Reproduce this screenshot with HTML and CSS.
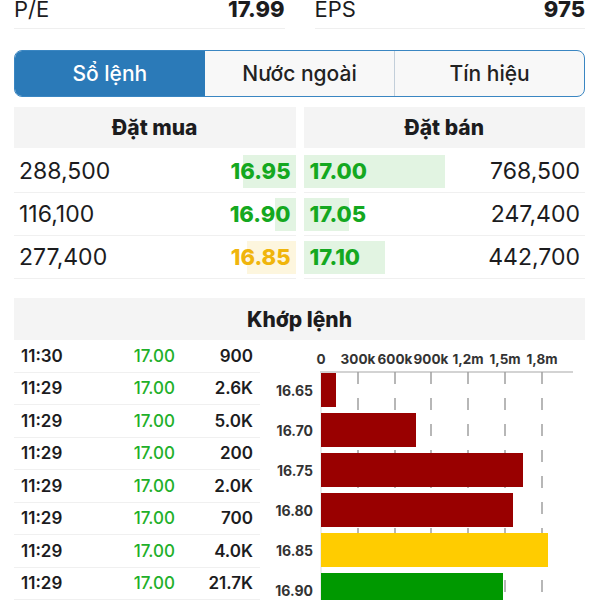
FILE: index.html
```html
<!DOCTYPE html>
<html>
<head>
    <title>Sổ lệnh</title>
    <link rel="stylesheet" href="styles.css">
</head>
<body>
    <div class="container">
        <div class="stats">
            <div class="stat"><span>P/E</span><b>17.99</b></div>
            <div class="stat"><span>EPS</span><b>975</b></div>
        </div>

        <div class="tabs">
            <div class="tab active">Sổ lệnh</div>
            <div class="tab">Nước ngoài</div>
            <div class="tab">Tín hiệu</div>
        </div>

        <div class="book">
            <div class="book-head">Đặt mua</div>
            <div class="book-head">Đặt bán</div>

            <div class="cell bid">
                <span>288,500</span>
                <div class="bar" style="width: 53px"></div>
                <b class="price up">16.95</b>
            </div>
            <div class="cell ask">
                <div class="bar" style="width: 141px"></div>
                <b class="price up">17.00</b>
                <span>768,500</span>
            </div>

            <div class="cell bid">
                <span>116,100</span>
                <div class="bar" style="width: 21px"></div>
                <b class="price up">16.90</b>
            </div>
            <div class="cell ask">
                <div class="bar" style="width: 45px"></div>
                <b class="price up">17.05</b>
                <span>247,400</span>
            </div>

            <div class="cell bid">
                <span>277,400</span>
                <div class="bar ref" style="width: 49px"></div>
                <b class="price ref">16.85</b>
            </div>
            <div class="cell ask">
                <div class="bar" style="width: 81px"></div>
                <b class="price up">17.10</b>
                <span>442,700</span>
            </div>
        </div>

        <div class="match-head">Khớp lệnh</div>

        <div class="match">
            <div class="ticks">
                <div class="tick"><span>11:30</span><span class="up">17.00</span><span>900</span></div>
                <div class="tick"><span>11:29</span><span class="up">17.00</span><span>2.6K</span></div>
                <div class="tick"><span>11:29</span><span class="up">17.00</span><span>5.0K</span></div>
                <div class="tick"><span>11:29</span><span class="up">17.00</span><span>200</span></div>
                <div class="tick"><span>11:29</span><span class="up">17.00</span><span>2.0K</span></div>
                <div class="tick"><span>11:29</span><span class="up">17.00</span><span>700</span></div>
                <div class="tick"><span>11:29</span><span class="up">17.00</span><span>4.0K</span></div>
                <div class="tick"><span>11:29</span><span class="up">17.00</span><span>21.7K</span></div>
            </div>

            <svg class="chart" width="325" height="260" viewBox="260 340 325 260">
                <!-- scale labels -->
                <g class="axis-label">
                    <text x="321" y="364">0</text>
                    <text x="358" y="364">300k</text>
                    <text x="395" y="364">600k</text>
                    <text x="431" y="364">900k</text>
                    <text x="468" y="364">1,2m</text>
                    <text x="505" y="364">1,5m</text>
                    <text x="542" y="364">1,8m</text>
                </g>

                <!-- grid -->
                <line x1="320" y1="372" x2="573" y2="372" stroke="#c4c4c4" stroke-width="1.5"/>
                <line x1="321" y1="372" x2="321" y2="600" stroke="#dcdcdc" stroke-width="1"/>
                <g stroke="#a0a0a0" stroke-width="1.5" stroke-dasharray="12 14">
                    <line x1="358" y1="372" x2="358" y2="600"/>
                    <line x1="395" y1="372" x2="395" y2="600"/>
                    <line x1="431" y1="372" x2="431" y2="600"/>
                    <line x1="468" y1="372" x2="468" y2="600"/>
                    <line x1="505" y1="372" x2="505" y2="600"/>
                    <line x1="542" y1="372" x2="542" y2="600"/>
                </g>

                <!-- volume by price -->
                <rect x="321" y="373" width="15" height="34" fill="#990000"/>
                <rect x="321" y="413" width="95" height="34" fill="#990000"/>
                <rect x="321" y="453" width="202" height="34" fill="#990000"/>
                <rect x="321" y="493" width="192" height="34" fill="#990000"/>
                <rect x="321" y="533" width="227" height="34" fill="#ffcc00"/>
                <rect x="321" y="573" width="182" height="34" fill="#009900"/>

                <g class="price-label">
                    <text x="313" y="396">16.65</text>
                    <text x="313" y="436">16.70</text>
                    <text x="313" y="476">16.75</text>
                    <text x="313" y="516">16.80</text>
                    <text x="313" y="556">16.85</text>
                    <text x="313" y="596">16.90</text>
                </g>
            </svg>
        </div>
    </div>
</body>
</html>
```

FILE: styles.css
```css
body {
    background-color: #fff;
    font-family: Inter, "Noto Sans", sans-serif;
    color: #1c1c1e;
    margin: 0;
    padding: 0;
    overflow: hidden;
}

.container {
    padding: 0 15px 0 14px;
}

.up {
    color: #14a820;
}

.ref {
    color: #f0b50c;
}

/* top stats */
.stats {
    display: grid;
    grid-template-columns: 1fr 1fr;
    column-gap: 30px;
    margin-top: -4px;
}

.stat {
    display: flex;
    justify-content: space-between;
    font-size: 22px;
    line-height: 26px;
    padding-bottom: 6px;
    border-bottom: 1px solid #efefef;
}

.stat b {
    font-weight: 800;
}

/* tabs */
.tabs {
    display: grid;
    grid-template-columns: 1fr 1fr 1fr;
    margin-top: 21px;
    height: 47px;
    box-sizing: border-box;
    border: 1.5px solid #3a86c2;
    border-radius: 8px;
    overflow: hidden;
    background-color: #f8f8f8;
}

.tab {
    display: flex;
    align-items: center;
    justify-content: center;
    font-size: 21px;
    font-weight: 500;
    color: #222;
}

.tab + .tab {
    border-left: 1px solid #c3cfda;
}

.tab.active {
    background-color: #2b7ab8;
    color: #fff;
}

.tab.active + .tab {
    border-left: none;
}

/* order book */
.book {
    display: grid;
    grid-template-columns: 1fr 1fr;
    column-gap: 8px;
    margin-top: 10px;
}

.book-head {
    height: 41px;
    margin-bottom: 2px;
    background-color: #f4f4f4;
    display: flex;
    align-items: center;
    justify-content: center;
    font-size: 21px;
    font-weight: 800;
}

.cell {
    position: relative;
    height: 42px;
    border-bottom: 1px solid #f0f0f0;
    display: flex;
    align-items: center;
    justify-content: space-between;
    font-size: 23px;
}

.cell span,
.cell .price {
    position: relative;
    z-index: 1;
}

.cell .price {
    font-size: 22px;
    font-weight: 800;
}

.bid {
    padding: 0 5px;
}

.ask {
    padding: 0 5px 0 6px;
}

.bar {
    position: absolute;
    top: 5px;
    height: 33px;
    background-color: #e2f4e2;
}

.bar.ref {
    background-color: #fdf6de;
}

.bid .bar {
    right: 0;
}

.ask .bar {
    left: 0;
}

/* matched orders */
.match-head {
    margin-top: 19px;
    height: 42px;
    background-color: #f4f4f4;
    display: flex;
    align-items: center;
    justify-content: center;
    font-size: 21px;
    font-weight: 800;
}

.match {
    display: grid;
    grid-template-columns: 246px 1fr;
}

.tick {
    display: grid;
    grid-template-columns: 1fr 1fr 1fr;
    align-items: center;
    height: 32.5px;
    box-sizing: border-box;
    border-bottom: 1px solid #f0f0f0;
    font-size: 17px;
    font-weight: 600;
}

.tick span:first-child {
    padding-left: 7px;
}

.tick span:nth-child(2) {
    text-align: right;
    padding-right: 3px;
    color: #1fb02a;
    font-weight: 500;
}

.tick span:last-child {
    text-align: right;
    padding-right: 7px;
}

.chart {
    display: block;
}

.axis-label text {
    font-family: Inter, sans-serif;
    font-size: 13.5px;
    font-weight: 700;
    fill: #333;
    text-anchor: middle;
}

.price-label text {
    font-family: Inter, sans-serif;
    font-size: 14px;
    font-weight: 700;
    fill: #333;
    text-anchor: end;
}
```
